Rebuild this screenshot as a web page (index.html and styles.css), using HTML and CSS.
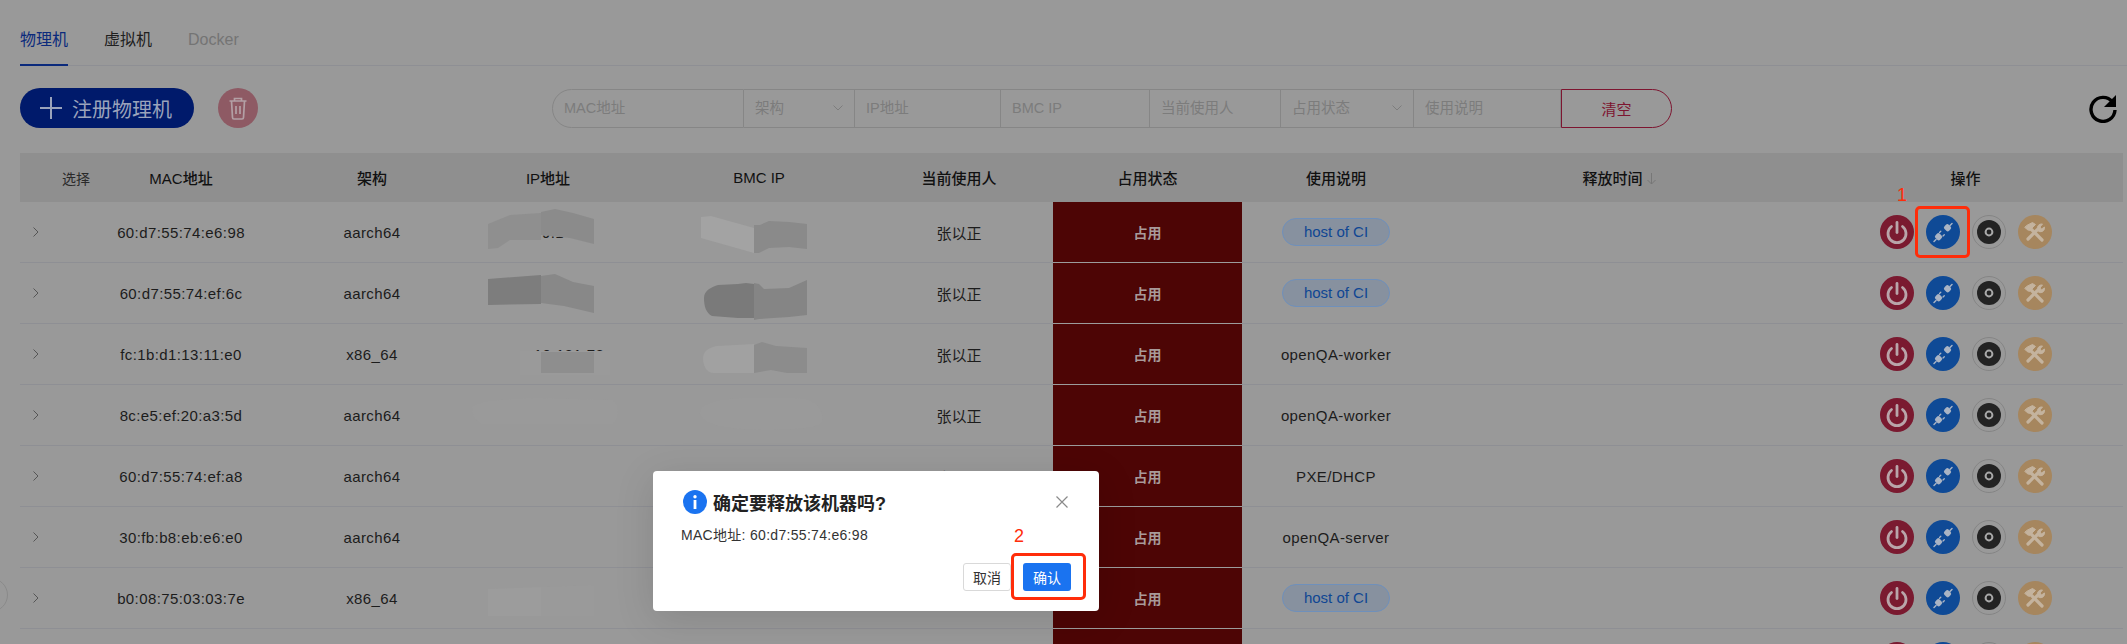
FILE: index.html
```html
<!DOCTYPE html>
<html lang="zh-CN">
<head>
  <meta charset="UTF-8">
  <meta name="viewport" content="width=device-width, initial-scale=1">
  <title>物理机</title>
  <link rel="stylesheet" href="styles.css">
</head>
<body>

  <!-- shared icons for the action column -->
  <svg class="defs" width="0" height="0">
    <symbol id="i-power" viewBox="0 0 34 34">
      <path d="M11.5 11.5a9 9 0 1 0 11 0" fill="none" stroke="#b9a5aa" stroke-width="2.8" stroke-linecap="round"/>
      <path d="M17 7.5v10" fill="none" stroke="#b9a5aa" stroke-width="2.8" stroke-linecap="round"/>
    </symbol>
    <symbol id="i-plug" viewBox="0 0 34 34">
      <g fill="#aab4c4" stroke="#aab4c4" stroke-linecap="round">
        <rect x="18.500" y="9.500" width="6" height="6.500" rx="2" transform="rotate(-45 21.500 12.700)" stroke="none"/>
        <path d="M24 10.500l2-2" stroke-width="1.500" fill="none"/>
        <rect x="9.500" y="18.500" width="6" height="6.500" rx="2" transform="rotate(-45 12.500 21.700)" stroke="none"/>
        <path d="M13.500 17.500l1.300-1.300M17 21l1.300-1.300" stroke-width="1.300" fill="none"/>
        <path d="M10 24.500l-2 2" stroke-width="1.500" fill="none"/>
      </g>
    </symbol>
    <symbol id="i-disc" viewBox="0 0 34 34">
      <circle cx="17" cy="17" r="16.5" fill="none" stroke="#858585" stroke-width="1"/>
      <circle cx="17" cy="17" r="12" fill="#232323"/>
      <circle cx="17" cy="17" r="3.4" fill="none" stroke="#a8a8a8" stroke-width="2"/>
    </symbol>
    <symbol id="i-tool" viewBox="0 0 34 34">
      <g fill="none" stroke="#c4b39e" stroke-linecap="round">
        <path d="M13 14l11 11" stroke-width="3.200"/>
        <path d="M9.500 10l5-2.500 3 2-6 6-2.500-1-2-2z" fill="#c4b39e" stroke-width="1"/>
        <path d="M10 24l9.500-9.500" stroke-width="3.200"/>
        <path d="M19.500 14.500c-1-3 1.500-6 5-5.500l-2.500 3 1.500 2 3-2c.5 3.500-2.500 5.500-5.500 4.500z" fill="#c4b39e" stroke-width="1"/>
      </g>
    </symbol>
  </svg>

  <nav class="tabs">
    <a class="tab active">物理机</a>
    <a class="tab">虚拟机</a>
    <a class="tab disabled">Docker</a>
  </nav>

  <div class="toolbar">
    <button class="btn-add">
      <svg class="plus" width="22" height="22" viewBox="0 0 22 22"><path d="M11 0v22M0 11h22" stroke="#9aa3bb" stroke-width="2" fill="none"/></svg>
      <span>注册物理机</span>
    </button>
    <button class="btn-trash">
      <svg width="20" height="24" viewBox="0 0 20 24" fill="none" stroke="#b3a0a5" stroke-width="1.700">
        <path d="M1.500 5h17M6.500 5V2.500h7V5M3.500 5l1 16.500c0 1 .5 1.500 1.500 1.500h8c1 0 1.500-.5 1.500-1.500l1-16.500M8 10v8M12 10v8"/>
      </svg>
    </button>

    <div class="filters">
      <div class="field f-mac">MAC地址</div>
      <div class="field f-arch select">架构<svg class="caret" width="10" height="6" viewBox="0 0 10 6"><path d="M.5.5L5 5 9.500.5" fill="none" stroke="#7d7d7d"/></svg></div>
      <div class="field f-ip">IP地址</div>
      <div class="field f-bmc">BMC IP</div>
      <div class="field f-user">当前使用人</div>
      <div class="field f-state select">占用状态<svg class="caret" width="10" height="6" viewBox="0 0 10 6"><path d="M.5.5L5 5 9.500.5" fill="none" stroke="#7d7d7d"/></svg></div>
      <div class="field f-desc">使用说明</div>
      <button class="btn-clear">清空</button>
    </div>

    <svg class="refresh" width="30" height="30" viewBox="0 0 30 30">
      <path d="M24.500 9A12 12 0 1 0 27 17" fill="none" stroke="#000" stroke-width="3.400"/>
      <path d="M28 2v12H16z" fill="#000"/>
    </svg>
  </div>

  <table class="machines">
    <colgroup>
      <col class="c-exp"><col class="c-sel"><col class="c-mac"><col class="c-arch"><col class="c-ip"><col class="c-bmc"><col class="c-user"><col class="c-state"><col class="c-desc"><col class="c-time"><col class="c-ops">
    </colgroup>
    <thead>
      <tr>
        <th></th>
        <th class="sel">选择</th>
        <th class="mac">MAC地址</th>
        <th>架构</th>
        <th>IP地址</th>
        <th>BMC IP</th>
        <th>当前使用人</th>
        <th>占用状态</th>
        <th>使用说明</th>
        <th>释放时间 <svg class="sort" width="9" height="12" viewBox="0 0 9 12"><path d="M4.500 0v11M.5 7l4 4 4-4" fill="none" stroke="#777"/></svg></th>
        <th>操作</th>
      </tr>
    </thead>
    <tbody>
      <tr>
        <td><svg class="chev" width="6" height="10" viewBox="0 0 6 10"><path d="M.5.5L5 5 .5 9.500" fill="none" stroke="#555"/></svg></td><td></td>
        <td class="mac val">60:d7:55:74:e6:98</td><td class="val">aarch64</td><td class="val ip-one">9.1</td><td></td><td>张以正</td><td class="busy">占用</td>
        <td><span class="tag">host of CI</span></td><td></td>
        <td><div class="ops"><span class="op red"><svg><use href="#i-power"/></svg></span><span class="op blue"><svg><use href="#i-plug"/></svg></span><span class="op"><svg><use href="#i-disc"/></svg></span><span class="op tan"><svg><use href="#i-tool"/></svg></span></div></td>
      </tr>
      <tr>
        <td><svg class="chev" width="6" height="10" viewBox="0 0 6 10"><path d="M.5.5L5 5 .5 9.500" fill="none" stroke="#555"/></svg></td><td></td>
        <td class="mac val">60:d7:55:74:ef:6c</td><td class="val">aarch64</td><td></td><td></td><td>张以正</td><td class="busy">占用</td>
        <td><span class="tag">host of CI</span></td><td></td>
        <td><div class="ops"><span class="op red"><svg><use href="#i-power"/></svg></span><span class="op blue"><svg><use href="#i-plug"/></svg></span><span class="op"><svg><use href="#i-disc"/></svg></span><span class="op tan"><svg><use href="#i-tool"/></svg></span></div></td>
      </tr>
      <tr>
        <td><svg class="chev" width="6" height="10" viewBox="0 0 6 10"><path d="M.5.5L5 5 .5 9.500" fill="none" stroke="#555"/></svg></td><td></td>
        <td class="mac val">fc:1b:d1:13:11:e0</td><td class="val">x86_64</td><td class="val ip-three">10.121.78</td><td></td><td>张以正</td><td class="busy">占用</td>
        <td class="val">openQA-worker</td><td></td>
        <td><div class="ops"><span class="op red"><svg><use href="#i-power"/></svg></span><span class="op blue"><svg><use href="#i-plug"/></svg></span><span class="op"><svg><use href="#i-disc"/></svg></span><span class="op tan"><svg><use href="#i-tool"/></svg></span></div></td>
      </tr>
      <tr>
        <td><svg class="chev" width="6" height="10" viewBox="0 0 6 10"><path d="M.5.5L5 5 .5 9.500" fill="none" stroke="#555"/></svg></td><td></td>
        <td class="mac val">8c:e5:ef:20:a3:5d</td><td class="val">aarch64</td><td></td><td></td><td>张以正</td><td class="busy">占用</td>
        <td class="val">openQA-worker</td><td></td>
        <td><div class="ops"><span class="op red"><svg><use href="#i-power"/></svg></span><span class="op blue"><svg><use href="#i-plug"/></svg></span><span class="op"><svg><use href="#i-disc"/></svg></span><span class="op tan"><svg><use href="#i-tool"/></svg></span></div></td>
      </tr>
      <tr>
        <td><svg class="chev" width="6" height="10" viewBox="0 0 6 10"><path d="M.5.5L5 5 .5 9.500" fill="none" stroke="#555"/></svg></td><td></td>
        <td class="mac val">60:d7:55:74:ef:a8</td><td class="val">aarch64</td><td></td><td></td><td>张以正</td><td class="busy">占用</td>
        <td class="val">PXE/DHCP</td><td></td>
        <td><div class="ops"><span class="op red"><svg><use href="#i-power"/></svg></span><span class="op blue"><svg><use href="#i-plug"/></svg></span><span class="op"><svg><use href="#i-disc"/></svg></span><span class="op tan"><svg><use href="#i-tool"/></svg></span></div></td>
      </tr>
      <tr>
        <td><svg class="chev" width="6" height="10" viewBox="0 0 6 10"><path d="M.5.5L5 5 .5 9.500" fill="none" stroke="#555"/></svg></td><td></td>
        <td class="mac val">30:fb:b8:eb:e6:e0</td><td class="val">aarch64</td><td></td><td></td><td>张以正</td><td class="busy">占用</td>
        <td class="val">openQA-server</td><td></td>
        <td><div class="ops"><span class="op red"><svg><use href="#i-power"/></svg></span><span class="op blue"><svg><use href="#i-plug"/></svg></span><span class="op"><svg><use href="#i-disc"/></svg></span><span class="op tan"><svg><use href="#i-tool"/></svg></span></div></td>
      </tr>
      <tr>
        <td><svg class="chev" width="6" height="10" viewBox="0 0 6 10"><path d="M.5.5L5 5 .5 9.500" fill="none" stroke="#555"/></svg></td><td></td>
        <td class="mac val">b0:08:75:03:03:7e</td><td class="val">x86_64</td><td></td><td></td><td>张以正</td><td class="busy">占用</td>
        <td><span class="tag">host of CI</span></td><td></td>
        <td><div class="ops"><span class="op red"><svg><use href="#i-power"/></svg></span><span class="op blue"><svg><use href="#i-plug"/></svg></span><span class="op"><svg><use href="#i-disc"/></svg></span><span class="op tan"><svg><use href="#i-tool"/></svg></span></div></td>
      </tr>
      <tr>
        <td></td><td></td><td></td><td></td><td></td><td></td><td></td><td class="busy"></td><td></td><td></td>
        <td><div class="ops"><span class="op red"><svg><use href="#i-power"/></svg></span><span class="op blue"><svg><use href="#i-plug"/></svg></span><span class="op"><svg><use href="#i-disc"/></svg></span><span class="op tan"><svg><use href="#i-tool"/></svg></span></div></td>
      </tr>
    </tbody>
  </table>

  <!-- paint-over on the addresses -->
  <svg class="smudges" width="2127" height="644" viewBox="0 0 2127 644">
    <path d="M488 224l22-9 31-2v27l-31 0-12 8-10 1z" fill="#8f8f8f"/>
    <path d="M541 212l14-3 18 4 21 6v25l-24-6-29-3z" fill="#8b8b8b"/>
    <path d="M701 217l10-1 43 12v25l-53-15z" fill="#a3a3a3"/>
    <path d="M754 225h6l9-4 20 1 18 2v25l-18-2-20 1-10 5h-5z" fill="#8a8a8a"/>
    <path d="M488 279l53-4v29l-53 1z" fill="#7d7d7d"/>
    <path d="M541 276l14-2 18 8 21 4v27l-30-7-23-3z" fill="#888"/>
    <path d="M704 298c0-8 8-11 14-13l20-1 8-1 8 1v34h-16l-26-2c-6-3-8-10-8-18z" fill="#7a7a7a"/>
    <path d="M754 283l5 1 5 5 25-1 18-8v35l-18 2-30 2-5 1z" fill="#858585"/>
    <path d="M520 351h90v24h-90z" fill="#9a9a9a"/>
    <path d="M541 352h53v21h-53z" fill="#8e8e8e"/>
    <path d="M703 358c0-8 8-11 14-12l37-2v29h-40c-8 0-11-8-11-15z" fill="#a1a1a1"/>
    <path d="M754 345l8-3 14 4 31 2v25l-20 0-16-3-17 3z" fill="#8c8c8c"/>
    <path d="M472 408c0-8 50-10 70-10l70 2c8 4 8 20 0 24h-130c-8-4-10-10-10-16z" fill="#9a9a9a"/>
    <path d="M700 412c2-12 30-14 54-14h40c24 0 30 14 28 24-2 6-30 8-60 8-34 0-64-6-62-18z" fill="#9a9a9a"/>
    <path d="M488 589l53-2v29h-53z" fill="#9c9c9c"/>
    <path d="M541 587l53-2v31h-53z" fill="#9a9a9a"/>
  </svg>

  <div class="side-handle"></div>

  <div class="modal">
    <div class="modal-title">
      <svg class="info" width="24" height="24" viewBox="0 0 24 24">
        <circle cx="12" cy="12" r="12" fill="#1a73f0"/>
        <rect x="10.600" y="10" width="2.800" height="9" fill="#fff"/>
        <circle cx="12" cy="6.800" r="1.700" fill="#fff"/>
      </svg>
      <span>确定要释放该机器吗?</span>
      <svg class="close" width="12" height="12" viewBox="0 0 12 12"><path d="M.5.5l11 11M11.500.5l-11 11" stroke="#8a8a8a" stroke-width="1.200" fill="none"/></svg>
    </div>
    <p class="modal-text">MAC地址: 60:d7:55:74:e6:98</p>
    <div class="modal-foot">
      <button class="btn-cancel">取消</button>
      <button class="btn-ok">确认</button>
    </div>
  </div>

  <!-- red annotations drawn over the screenshot -->
  <div class="mark box-one"></div>
  <span class="mark-no no-one">1</span>
  <div class="mark box-two"></div>
  <span class="mark-no no-two">2</span>

</body>
</html>
```

FILE: styles.css
```css
* {
  box-sizing: border-box;
}

html, body {
  height: 644px;
  overflow: hidden;
}

body {
  position: relative;
  margin: 0;
  background-color: #999;
  color: #1c1c1c;
  font-family: "Liberation Sans", "Noto Sans CJK SC", sans-serif;
  font-size: 15px;
}

button {
  font-family: inherit;
  cursor: pointer;
}

.defs {
  position: absolute;
}

/* tabs */
.tabs {
  display: flex;
  gap: 36px;
  height: 66px;
  margin: 0 0 0 20px;
  border-bottom: 1px solid #8e8f94;
}

.tab {
  height: 66px;
  padding-top: 28px;
  font-size: 16px;
  line-height: 24px;
  color: #202020;
}

.tab.active {
  color: #0b2a7c;
  border-bottom: 2px solid #0b2a7c;
}

.tab.disabled {
  color: #747474;
}

/* toolbar */
.toolbar {
  display: flex;
  align-items: center;
  height: 40px;
  margin: 22px 9px 0 20px;
}

.btn-add {
  display: flex;
  align-items: center;
  gap: 10px;
  width: 174px;
  height: 40px;
  padding: 0 0 0 20px;
  border: none;
  border-radius: 20px;
  background-color: #001a6b;
  color: #9aa3bb;
  font-size: 20px;
}

.btn-trash {
  display: flex;
  align-items: center;
  justify-content: center;
  width: 40px;
  height: 40px;
  margin-left: 24px;
  padding: 0;
  border: none;
  border-radius: 50%;
  background-color: #8e5a64;
}

.filters {
  display: flex;
  height: 39px;
  margin-left: 294px;
}

.field {
  display: flex;
  align-items: center;
  justify-content: space-between;
  padding: 0 11px;
  border: 1px solid #868686;
  border-left: none;
  color: #7c7c7c;
  font-size: 14.500px;
  line-height: 20px;
}

.f-mac {
  width: 192px;
  border-left: 1px solid #868686;
  border-radius: 20px 0 0 20px;
}
.f-arch { width: 111px; }
.f-ip { width: 146px; }
.f-bmc { width: 149px; }
.f-user { width: 131px; }
.f-state { width: 133px; }
.f-desc { width: 147px; }

.btn-clear {
  width: 111px;
  padding: 0;
  border: 1px solid #7d1530;
  border-radius: 0 20px 20px 0;
  background: transparent;
  color: #7d1530;
  font-size: 15px;
}

.refresh {
  margin-left: auto;
}

/* table */
.machines {
  width: 2103px;
  margin: 25px 0 0 20px;
  border-collapse: separate;
  border-spacing: 0;
  table-layout: fixed;
}

.c-exp { width: 36px; }
.c-sel { width: 40px; }
.c-mac { width: 205px; }
.c-arch { width: 142px; }
.c-ip { width: 210px; }
.c-bmc { width: 212px; }
.c-user { width: 188px; }
.c-state { width: 189px; }
.c-desc { width: 188px; }
.c-time { width: 378px; }
.c-ops { width: 315px; }

.machines th {
  height: 49px;
  padding: 0;
  background-color: #8f8f8f;
  color: #111;
  font-size: 15px;
  font-weight: 500;
}

.machines th.sel {
  font-size: 14px;
  font-weight: 400;
  color: #2a2a2a;
}

.machines td {
  height: 61px;
  padding: 0;
  border-bottom: 1px solid #8e8f94;
  text-align: center;
  white-space: nowrap;
}

.machines .mac {
  padding-right: 35px;
}

.machines .ip-one {
  padding-left: 10px;
}

.machines .ip-three {
  padding-left: 42px;
}

.val {
  letter-spacing: .4px;
}

.chev {
  display: block;
  margin: -1px 0 0 13px;
}

.sort {
  vertical-align: -1px;
}

.machines td.busy {
  background-color: #4d0505;
  border-bottom-color: #9c9c9c;
  color: #a89a9a;
  font-size: 14px;
  font-weight: 700;
}

.tag {
  display: inline-block;
  width: 108px;
  height: 28px;
  border: 1px solid #6f90bb;
  border-radius: 14px;
  background-color: #87919f;
  color: #0f4693;
  line-height: 26px;
}

.ops {
  display: flex;
  justify-content: center;
  gap: 12px;
}

.op {
  width: 34px;
  height: 34px;
  border-radius: 50%;
}

.op svg {
  display: block;
  width: 34px;
  height: 34px;
}

.op.red { background-color: #7a1a30; }
.op.blue { background-color: #0f4a96; }
.op.tan { background-color: #a6865e; }

/* paint-over layer and handle */
.smudges {
  position: absolute;
  top: 0;
  left: 0;
}

.side-handle {
  position: absolute;
  left: -26px;
  top: 578px;
  width: 34px;
  height: 34px;
  border: 1px solid #8a8a8a;
  border-radius: 50%;
}

/* modal */
.modal {
  position: absolute;
  left: 653px;
  top: 471px;
  width: 446px;
  height: 140px;
  padding: 19px 28px 20px 28px;
  border-radius: 4px;
  background: #fff;
  box-shadow: 0 8px 40px rgba(0, 0, 0, .12);
}

.modal-title {
  display: flex;
  align-items: center;
  gap: 6px;
  margin-left: 2px;
  height: 24px;
  color: #222;
  font-size: 18px;
  font-weight: 700;
}

.close {
  margin-left: auto;
  margin-right: 3px;
}

.modal-text {
  margin: 11px 0 0 0;
  color: #333;
  font-size: 14px;
  line-height: 20px;
  letter-spacing: .3px;
}

.modal-foot {
  display: flex;
  justify-content: flex-end;
  gap: 12px;
  margin-top: 18px;
}

.modal-foot button {
  width: 48px;
  height: 28px;
  padding: 0;
  border-radius: 3px;
  font-size: 14px;
}

.btn-cancel {
  border: 1px solid #d9d9d9;
  background: #fff;
  color: #333;
}

.btn-ok {
  border: none;
  background: #1a73f0;
  color: #fff;
}

/* annotations */
.mark {
  position: absolute;
  border: 3px solid #ff2d0a;
  border-radius: 5px;
}

.box-one {
  left: 1915px;
  top: 206px;
  width: 55px;
  height: 52px;
}

.box-two {
  left: 1011px;
  top: 553px;
  width: 75px;
  height: 47px;
}

.mark-no {
  position: absolute;
  color: #ff2d0a;
  font-size: 18px;
  line-height: 20px;
}

.no-one {
  left: 1897px;
  top: 185px;
}

.no-two {
  left: 1014px;
  top: 526px;
}
```
